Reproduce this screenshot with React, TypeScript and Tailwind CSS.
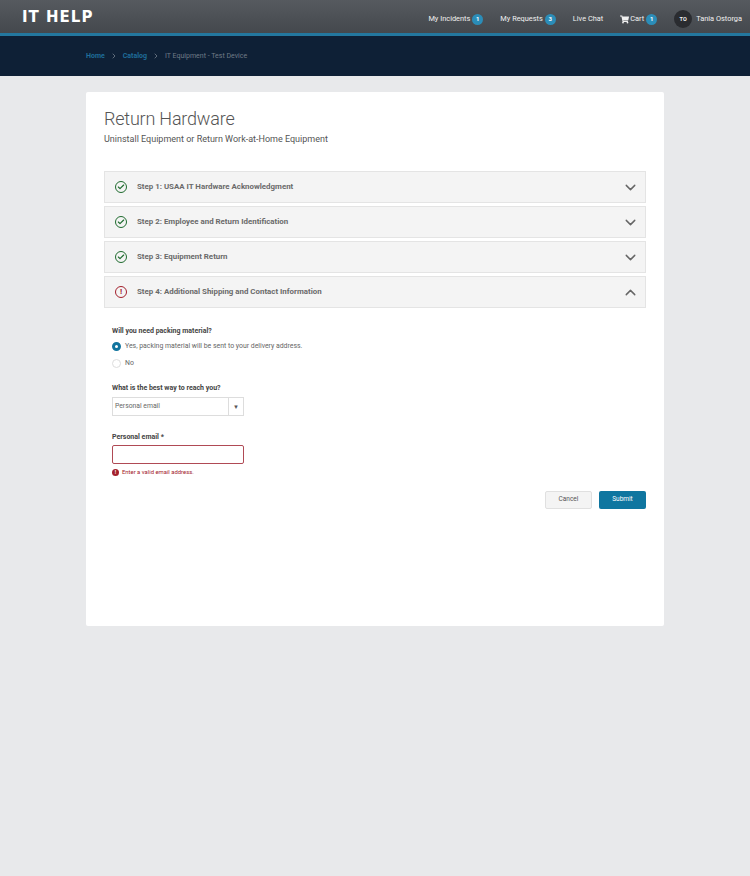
import { ChevronDown, ChevronRight, ChevronUp, Check } from "lucide-react";
import { FaShoppingCart } from "react-icons/fa";

const steps = [
  { label: "Step 1: USAA IT Hardware Acknowledgment", ok: true },
  { label: "Step 2: Employee and Return Identification", ok: true },
  { label: "Step 3: Equipment Return", ok: true },
  { label: "Step 4: Additional Shipping and Contact Information", ok: false },
];

function Badge({ n }: { n: number }) {
  return (
    <span className="ml-[2px] flex h-[11px] w-[11px] items-center justify-center rounded-full bg-[#2b8db8] text-[6px] font-bold text-white">
      {n}
    </span>
  );
}

function StepRow({ label, ok }: { label: string; ok: boolean }) {
  return (
    <div className="flex h-[32px] items-center border border-[#e4e4e4] bg-[#f4f4f4] pl-[10px] pr-[6px]">
      {ok ? (
        <span className="flex h-[12px] w-[12px] items-center justify-center rounded-full border-[1.5px] border-[#1f6b2e]">
          <Check size={8} strokeWidth={3.5} className="text-[#1f6b2e]" />
        </span>
      ) : (
        <span className="flex h-[12px] w-[12px] items-center justify-center rounded-full border-[1.5px] border-[#a3202c] text-[8px] font-bold leading-none text-[#a3202c]">
          !
        </span>
      )}
      <span className="ml-[10px] flex-1 text-[7.9px] font-bold text-[#6a6a6a]">{label}</span>
      {ok ? (
        <ChevronDown size={17} strokeWidth={2} className="text-[#666]" />
      ) : (
        <ChevronUp size={17} strokeWidth={2} className="text-[#666]" />
      )}
    </div>
  );
}

export default function App() {
  return (
    <div className="flex min-h-[876px] flex-col bg-[#e8e9eb] font-['Roboto','Noto_Sans',sans-serif]">
      <header className="flex h-[36px] items-start justify-between border-b-[3px] border-[#23779f] bg-gradient-to-b from-[#565a5f] to-[#44484d] pl-[22px] pr-[8px]">
        <div className="mt-[7px] font-['DejaVu_Sans',sans-serif] text-[15px] font-bold leading-[20px] tracking-[1px] text-white">IT HELP</div>
        <nav className="mt-[10px] flex items-center text-[7.4px] leading-[12px] text-[#f0f0f0]">
          <span className="flex items-center">My Incidents<Badge n={1} /></span>
          <span className="ml-[17px] flex items-center">My Requests<Badge n={3} /></span>
          <span className="ml-[17px]">Live Chat</span>
          <span className="ml-[17px] flex items-center">
            <FaShoppingCart size={9} className="mr-[1px]" />Cart<Badge n={1} />
          </span>
          <span className="ml-[17px] flex h-[18px] w-[18px] items-center justify-center rounded-full bg-[#2a2c30] text-[5.5px] font-bold">TO</span>
          <span className="ml-[4px]">Tania Ostorga</span>
        </nav>
      </header>
      <div className="flex h-[40px] items-center bg-[#0e2036] pl-[86px] text-[7px]">
        <span className="font-bold text-[#1f6d99]">Home</span>
        <ChevronRight size={8} strokeWidth={2} className="mx-[5px] text-[#8a949e]" />
        <span className="font-bold text-[#1f6d99]">Catalog</span>
        <ChevronRight size={8} strokeWidth={2} className="mx-[5px] text-[#8a949e]" />
        <span className="text-[#6f7a86]">IT Equipment - Test Device</span>
      </div>
      <main className="mx-[86px] mt-[16px] h-[534px] rounded-[2px] bg-white px-[18px] pt-[14px]">
        <h1 className="text-[18px] font-light leading-[26px] tracking-[-0.2px] text-[#555]">Return Hardware</h1>
        <p className="text-[9px] leading-[14px] text-[#555]">Uninstall Equipment or Return Work-at-Home Equipment</p>
        <div className="mt-[25px] flex flex-col gap-[3px]">
          {steps.map((s) => (
            <StepRow key={s.label} label={s.label} ok={s.ok} />
          ))}
        </div>
        <form className="mt-[18px] pl-[8px]">
          <div className="text-[7px] font-bold leading-[10px] text-[#444]">Will you need packing material?</div>
          <label className="mt-[3px] flex h-[14px] items-center text-[6.9px] text-[#666]">
            <span className="mr-[4px] h-[9px] w-[9px] rounded-full border-[3px] border-[#12759f] bg-white" />
            Yes, packing material will be sent to your delivery address.
          </label>
          <label className="mt-[3px] flex h-[14px] items-center text-[6.9px] text-[#666]">
            <span className="mr-[4px] h-[9px] w-[9px] rounded-full border border-[#ddd] bg-white" />
            No
          </label>
          <div className="mt-[13px] text-[7px] font-bold leading-[10px] text-[#444]">What is the best way to reach you?</div>
          <div className="mt-[4px] flex h-[19px] w-[132px] items-center border border-[#ddd] text-[6.8px] text-[#666]">
            <span className="flex-1 pl-[2px]">Personal email</span>
            <span className="flex h-full w-[15px] items-center justify-center border-l border-[#ddd] text-[6px] text-[#555]">▼</span>
          </div>
          <div className="mt-[16px] text-[7px] font-bold leading-[10px] text-[#444]">Personal email *</div>
          <input className="mt-[3px] block h-[19px] w-[132px] rounded-[2px] border border-[#b04a55] bg-white" />
          <div className="mt-[4px] flex h-[9px] items-center text-[5.9px] text-[#a3202c]">
            <span className="mr-[3px] flex h-[7px] w-[7px] items-center justify-center rounded-full bg-[#a3202c] text-[5px] font-bold text-white">!</span>
            Enter a valid email address.
          </div>
          <div className="mt-[14px] flex justify-end gap-[7px]">
            <button type="button" className="h-[18px] w-[47px] rounded-[2px] border border-[#e0e0e0] bg-[#f4f4f4] text-[6.5px] text-[#555]">Cancel</button>
            <button type="button" className="h-[18px] w-[47px] rounded-[2px] bg-[#0f76a0] text-[6.5px] text-white">Submit</button>
          </div>
        </form>
      </main>
    </div>
  );
}
